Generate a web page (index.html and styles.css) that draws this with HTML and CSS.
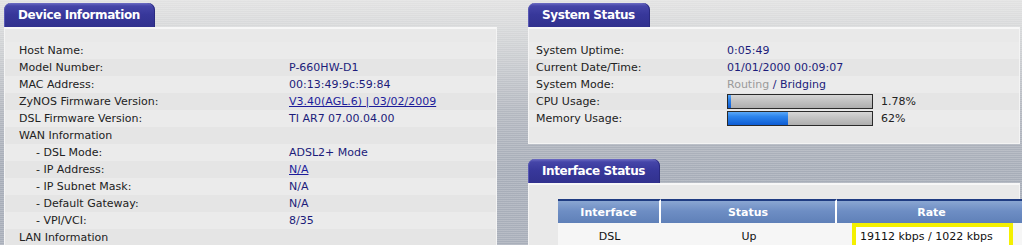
FILE: index.html
```html
<!DOCTYPE html>
<html lang="en">
<head>
    <meta charset="UTF-8">
    <meta name="viewport" content="width=device-width, initial-scale=1.0">
    <title>Status</title>
    <link rel="stylesheet" href="styles.css">
</head>
<body>

<div class="page">
    <!-- Device Information -->
    <section class="panel panel-device">
        <div class="tab">Device Information</div>
        <div class="box box-device">
            <div class="info info-device">
                <div class="row"><span class="label">Host Name:</span><span class="value"></span></div>
                <div class="row"><span class="label">Model Number:</span><span class="value">P-660HW-D1</span></div>
                <div class="row"><span class="label">MAC Address:</span><span class="value">00:13:49:9c:59:84</span></div>
                <div class="row"><span class="label">ZyNOS Firmware Version:</span><span class="value"><a href="#">V3.40(AGL.6) | 03/02/2009</a></span></div>
                <div class="row"><span class="label">DSL Firmware Version:</span><span class="value">TI AR7 07.00.04.00</span></div>
                <div class="row"><span class="label">WAN Information</span><span class="value"></span></div>
                <div class="row"><span class="label sub">- DSL Mode:</span><span class="value">ADSL2+ Mode</span></div>
                <div class="row"><span class="label sub">- IP Address:</span><span class="value"><a href="#">N/A</a></span></div>
                <div class="row"><span class="label sub">- IP Subnet Mask:</span><span class="value">N/A</span></div>
                <div class="row"><span class="label sub">- Default Gateway:</span><span class="value">N/A</span></div>
                <div class="row"><span class="label sub">- VPI/VCI:</span><span class="value">8/35</span></div>
                <div class="row"><span class="label">LAN Information</span><span class="value"></span></div>
            </div>
        </div>
    </section>

    <div class="column">
        <!-- System Status -->
        <section class="panel">
            <div class="tab">System Status</div>
            <div class="box box-system">
                <div class="info info-system">
                    <div class="row"><span class="label">System Uptime:</span><span class="value">0:05:49</span></div>
                    <div class="row"><span class="label">Current Date/Time:</span><span class="value">01/01/2000 00:09:07</span></div>
                    <div class="row"><span class="label">System Mode:</span><span class="value"><span class="dim">Routing</span> / Bridging</span></div>
                    <div class="row">
                        <span class="label">CPU Usage:</span>
                        <span class="value usage">
                            <span class="bar"><span class="fill" style="width: 2%"></span></span>
                            <span class="pct">1.78%</span>
                        </span>
                    </div>
                    <div class="row">
                        <span class="label">Memory Usage:</span>
                        <span class="value usage">
                            <span class="bar"><span class="fill" style="width: 42%"></span></span>
                            <span class="pct">62%</span>
                        </span>
                    </div>
                </div>
            </div>
        </section>

        <!-- Interface Status -->
        <section class="panel panel-iface">
            <div class="tab">Interface Status</div>
            <div class="box box-iface">
                <table class="iface">
                    <tr>
                        <th class="col-if">Interface</th>
                        <th class="col-st">Status</th>
                        <th class="col-rate">Rate</th>
                    </tr>
                    <tr>
                        <td>DSL</td>
                        <td>Up</td>
                        <td class="rate"><span class="hl">19112 kbps / 1022 kbps</span></td>
                    </tr>
                </table>
            </div>
        </section>
    </div>
</div>

</body>
</html>
```

FILE: styles.css
```css
/* base */
html, body {
    margin: 0;
    padding: 0;
    overflow: hidden;
}

body {
    font-family: "DejaVu Sans", Verdana, sans-serif;
    font-size: 11px;
    color: #222;
    background-color: #aab0ba;
    background-image:
        repeating-linear-gradient(to bottom, rgba(255, 255, 255, 0.18) 0, rgba(255, 255, 255, 0.18) 1px, transparent 1px, transparent 2px),
        linear-gradient(to bottom, #e2e2e2 0, #d2d4d6 40px, #b4b8c0 110px, #a7adb8 170px, #a9afba 245px);
}

.page {
    display: flex;
    padding: 3px 0 0 4px;
    gap: 31px;
    align-items: flex-start;
}

.panel-device {
    width: 493px;
}

.column {
    width: 492px;
    display: flex;
    flex-direction: column;
}

/* blue tab */
.tab {
    width: fit-content;
    height: 24px;
    line-height: 25px;
    padding: 0 15px 0 14px;
    white-space: nowrap;
    color: #fff;
    font-weight: bold;
    font-size: 12px;
    letter-spacing: -0.4px;
    border-radius: 7px 7px 0 0;
    background: linear-gradient(to bottom, #6c6cc4 0, #4545a8 3px, #37379a 12px, #31318e 100%);
    box-shadow: inset 1px 0 0 #5858b4, inset -1px 0 0 #2a2a80;
}

/* grey box */
.box {
    background: #e9e9e9;
    border-top: 2px solid #f7f7f7;
    border-left: 1px solid #f4f4f4;
    border-right: 1px solid #f4f4f4;
    border-bottom: 1px solid #f4f4f4;
}

.box-device {
    padding: 13px 0 20px 0;
}

.box-system {
    padding: 13px 0 16px 0;
}

.panel-iface {
    margin-top: 15px;
}

.box-iface {
    padding: 14px 0 20px 29px;
}

/* label / value rows */
.row {
    display: grid;
    height: 17px;
    line-height: 17px;
    white-space: nowrap;
    background: #ebebeb;
}

.row:nth-child(even) {
    background: #e5e5e5;
}

.info-device .row {
    grid-template-columns: 270px 1fr;
    padding-left: 14px;
}

.info-system .row {
    grid-template-columns: 191px 1fr;
    padding-left: 7px;
}

.label.sub {
    padding-left: 17px;
}

.value {
    color: #1c1c7a;
}

.value a {
    color: #1c1c9a;
    text-decoration: underline;
}

.dim {
    color: #9a9a9a;
}

/* usage bars */
.usage {
    display: flex;
    align-items: center;
    gap: 8px;
}

.bar {
    display: block;
    width: 144px;
    height: 13px;
    border: 1px solid #2a2a2a;
    background: linear-gradient(to bottom, #d6d6d6 0, #c4c4c4 40%, #aeaeae 100%);
}

.fill {
    display: block;
    height: 100%;
    background: linear-gradient(to bottom, #5aa8f8 0, #2c84ec 35%, #0d5cd4 100%);
}

.pct {
    color: #222;
}

/* interface table */
.iface {
    border-collapse: separate;
    border-spacing: 0;
    width: 470px;
}

.iface th {
    height: 22px;
    padding: 0;
    color: #fff;
    font-weight: bold;
    border-top: 2px solid #1f3c82;
    border-right: 2px solid #fff;
    background: linear-gradient(to bottom, #8aa6d2 0, #6e8ec4 45%, #5f80b8 100%);
}

.col-if {
    width: 101px;
}

.col-st {
    width: 174px;
}

.iface td {
    height: 26px;
    padding: 0;
    text-align: center;
    vertical-align: top;
    background: #f6f6f6;
    color: #111;
}

.iface td:not(.rate) {
    padding-top: 7px;
    height: 19px;
}

.iface td.rate {
    text-align: left;
    padding-left: 15px;
}

.hl {
    display: inline-block;
    border: 4px solid #f4f000;
    border-bottom: 0;
    background: #fff;
    padding: 3px 16px 6px 4px;
    color: #111;
}
```
